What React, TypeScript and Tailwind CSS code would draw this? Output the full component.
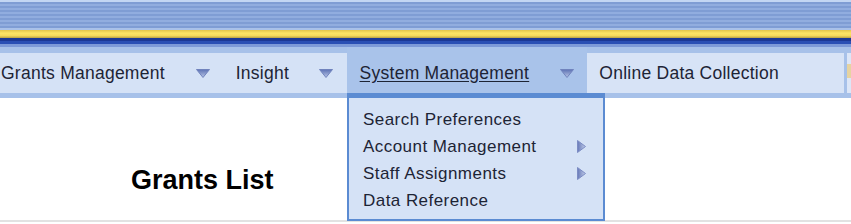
import React from "react";

// small down arrow used beside each top menu entry
function DownArrow() {
  return (
    <svg width="14" height="9" viewBox="0 0 14 9" className="shrink-0">
      <defs>
        <linearGradient id="dn" x1="0" y1="0" x2="0" y2="1">
          <stop offset="0" stopColor="#5d72b4" />
          <stop offset="1" stopColor="#b9c6e6" />
        </linearGradient>
      </defs>
      <polygon points="0.5,0.5 13.5,0.5 7,8.5" fill="url(#dn)" stroke="#7083bd" strokeWidth="1" />
    </svg>
  );
}

function RightArrow() {
  return (
    <svg width="9" height="13" viewBox="0 0 9 13" className="shrink-0">
      <defs>
        <linearGradient id="rt" x1="0" y1="0" x2="1" y2="0">
          <stop offset="0" stopColor="#6678b8" />
          <stop offset="1" stopColor="#c4cfea" />
        </linearGradient>
      </defs>
      <polygon points="0.5,0.5 8.5,6.5 0.5,12.5" fill="url(#rt)" stroke="#7c8cc4" strokeWidth="1" />
    </svg>
  );
}

const subItems = [
  { label: "Search Preferences", more: false },
  { label: "Account Management", more: true },
  { label: "Staff Assignments", more: true },
  { label: "Data Reference", more: false },
];

export default function App() {
  return (
    <div className="relative w-[851px] h-[224px] overflow-hidden bg-white font-['Liberation_Sans',Arial,sans-serif] text-[#1d2435]">
      {/* banner stripes */}
      <div className="h-[2px] bg-[#c3d6f3]" />
      <div className="h-[26px] bg-[repeating-linear-gradient(to_bottom,#7f9dd4_0px,#7f9dd4_2px,#91addf_2px,#91addf_4px)]" />
      <div className="h-[2px] bg-[#a9c1e9]" />
      <div className="h-[8px] bg-[linear-gradient(to_bottom,#e2c44a,#fde466_40%,#f6da5c_70%,#b9a044)]" />
      <div className="h-[3px] bg-[#1c3894]" />
      <div className="h-[3px] bg-[#2a4fb4]" />
      <div className="h-[3px] bg-[#7d9ad8]" />

      {/* menu bar */}
      <div className="flex h-[51px] bg-[#a7c1e9] pt-[6px] pb-[5px] text-[17.5px] tracking-[0.25px]">
        <div className="flex w-[222px] items-center justify-between bg-[#d5e2f6] pl-[1px] pr-[12px]">
          <span>Grants Management</span>
          <DownArrow />
        </div>
        <div className="flex w-[125px] items-center justify-between bg-[#d5e2f6] pl-[14px] pr-[14px]">
          <span>Insight</span>
          <DownArrow />
        </div>
        <div className="-mt-[6px] flex w-[241px] items-center justify-between bg-[#a9c3ea] pt-[6px] pl-[13px] pr-[13px]">
          <span className="underline underline-offset-2">System Management</span>
          <DownArrow />
        </div>
        <div className="flex w-[257px] items-center bg-[#d7e3f6] pl-[12px]">
          <span>Online Data Collection</span>
        </div>
        <div className="ml-[3px] flex flex-1 items-center bg-[#dce6f7]">
          <div className="mt-[-4px] h-[14px] w-[4px] bg-[#e6d3a0]" />
        </div>
      </div>

      {/* page body */}
      <div className="h-[124px] border-b-2 border-[#e2e2e2] pl-[131px] pt-[65px]">
        <h1 className="text-[27px] font-bold leading-[34px] text-black">Grants List</h1>
      </div>

      {/* open dropdown */}
      <div className="absolute left-[347px] top-[93px] w-[258px] border-2 border-t-[5px] border-[#5b8bd2] bg-[#d5e2f6] pt-[8px] pb-[5px] pl-[14px] pr-[17px] text-[17px] tracking-[0.45px]">
        {subItems.map((it) => (
          <div key={it.label} className="flex h-[27px] items-center justify-between">
            <span>{it.label}</span>
            {it.more && <RightArrow />}
          </div>
        ))}
      </div>
    </div>
  );
}
